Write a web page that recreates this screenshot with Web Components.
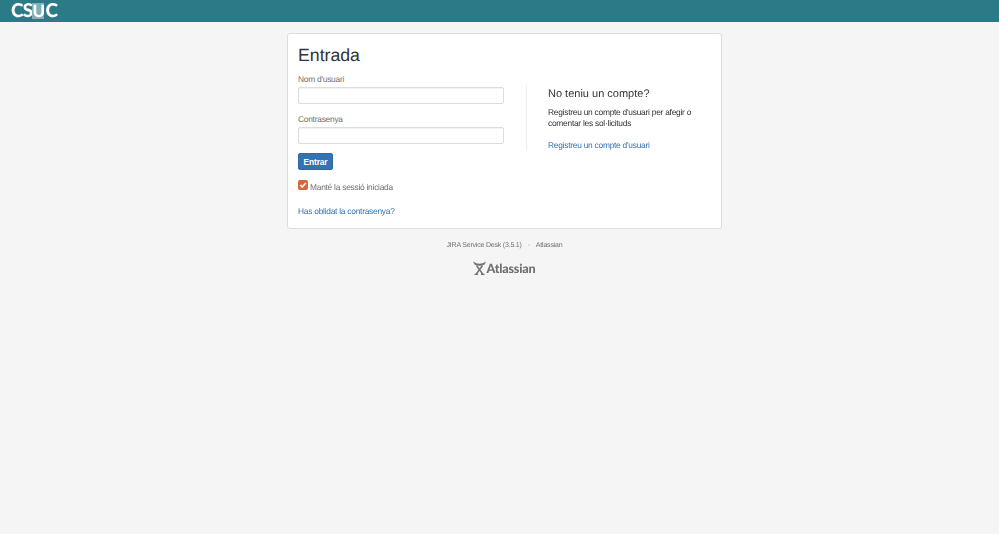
<!DOCTYPE html>
<html>
<head>
<meta charset="utf-8">
<title>Entrada</title>
<style>
    html, body { margin: 0; height: 100%; }
    body {
        background-color: #f5f5f5;
        color: #333;
        font-family: "Liberation Sans", Arial, sans-serif;
        font-size: 8.4px;
        letter-spacing: -0.25px;
        text-rendering: geometricPrecision;
    }
    /* the reference is a downscaled capture, everything in it is a bit soft */
    main, csuc-header { filter: blur(0.3px); }
    main { display: flex; flex-direction: column; align-items: center; padding: 11px 0 0 10px; }
</style>
</head>
<body>
<csuc-header></csuc-header>
<main>
    <login-card>
        <login-form></login-form>
        <signup-panel slot="side"></signup-panel>
    </login-card>
    <page-footer></page-footer>
</main>
<script>
class CsucHeader extends HTMLElement {
    constructor() {
        super();
        this.attachShadow({ mode: "open" }).innerHTML = `
            <style>
                :host { display: flex; align-items: center; height: 22px; background-color: #2a7a88; padding-left: 11px; }
                .logo { display: flex; align-items: center; color: #fff; font: 900 19px/20px Lato, "Liberation Sans", sans-serif; letter-spacing: -0.8px; }
                .u { display: inline-block; width: 12px; height: 16px; margin: 0 1px 0 0; line-height: 16px; text-align: center; background-color: #7fb1ba; color: #fff; font-size: 17px; letter-spacing: 0; }
            </style>
            <div class="logo">CS<span class="u">U</span>C</div>
        `;
    }
}

class LoginCard extends HTMLElement {
    constructor() {
        super();
        this.attachShadow({ mode: "open" }).innerHTML = `
            <style>
                :host { display: flex; box-sizing: border-box; width: 435px; height: 196px; padding: 10px; background-color: #fff; border: 1px solid #ddd; border-radius: 3px; }
                .main { width: 228px; box-sizing: border-box; padding-right: 22px; }
                .side { margin-top: 41px; height: 66px; padding-left: 21px; border-left: 1px solid #eee; flex: 1; }
            </style>
            <div class="main"><slot></slot></div>
            <div class="side"><slot name="side"></slot></div>
        `;
    }
}

class LoginForm extends HTMLElement {
    constructor() {
        super();
        this.attachShadow({ mode: "open" }).innerHTML = `
            <style>
                :host { display: block; color: #707070; }
                h1 { margin: 0 0 7px; height: 23px; font: 500 17.7px/23px "Liberation Sans", sans-serif; letter-spacing: 0; color: #333; }
                label { display: block; line-height: 10px; margin-bottom: 3px; }
                input[type=text], input[type=password] { display: block; box-sizing: border-box; width: 206px; height: 17px; padding: 0 5px; margin: 0 0 10px; border: 1px solid #ddd; border-radius: 2px; background: #fff; box-shadow: inset 0 1px 1px rgba(0,0,0,.05); outline: none; }
                button { display: block; margin: -1px 0 9px; width: 35px; height: 17px; padding: 0; color: #fff; background-color: #3572b0; border: 1px solid #2e6aa6; border-radius: 2px; font: bold 8.4px "Liberation Sans", sans-serif; letter-spacing: -0.1px; }
                .keep { display: flex; align-items: flex-end; height: 13px; margin-bottom: 14px; }
                .keep svg { display: block; width: 10px; height: 10px; margin: 0 2px 2px 0; }
                .keep span { line-height: 11px; position: relative; top: 1px; }
                a { display: block; color: #3572b0; text-decoration: none; line-height: 10px; }
            </style>
            <h1>Entrada</h1>
            <label>Nom d'usuari</label>
            <input type="text">
            <label>Contrasenya</label>
            <input type="password">
            <button>Entrar</button>
            <div class="keep">
                <svg viewBox="0 0 10 10"><rect width="10" height="10" rx="2" fill="#d9663a"/><path d="M2.3 5 L4.2 7 L7.8 3" fill="none" stroke="#fff" stroke-width="1.6"/></svg>
                <span>Manté la sessió iniciada</span>
            </div>
            <a href="#">Has oblidat la contrasenya?</a>
        `;
    }
}

class SignupPanel extends HTMLElement {
    constructor() {
        super();
        this.attachShadow({ mode: "open" }).innerHTML = `
            <style>
                :host { display: block; }
                h2 { margin: 1px 0 4px; font: 500 11px/17px "Liberation Sans", sans-serif; letter-spacing: 0; color: #333; }
                p { margin: 0 0 11px; line-height: 11px; color: #333; }
                a { color: #3572b0; text-decoration: none; line-height: 11px; display: block; }
            </style>
            <h2>No teniu un compte?</h2>
            <p>Registreu un compte d'usuari per afegir o<br>comentar les sol·licituds</p>
            <a href="#">Registreu un compte d'usuari</a>
        `;
    }
}

class PageFooter extends HTMLElement {
    constructor() {
        super();
        this.attachShadow({ mode: "open" }).innerHTML = `
            <style>
                :host { display: flex; flex-direction: column; align-items: center; margin-top: 12px; font-size: 7px; letter-spacing: -0.2px; color: #707070; }
                .links { display: flex; gap: 6px; line-height: 10px; }
                .brand { display: flex; align-items: flex-end; margin-top: 10px; font: 900 12.6px/16px Lato, "Liberation Sans", sans-serif; color: #707070; letter-spacing: -0.2px; }
                svg { width: 13px; height: 14px; display: block; margin-bottom: 2px; }
            </style>
            <div class="links"><span>JIRA Service Desk (3.5.1)</span><span>·</span><span>Atlassian</span></div>
            <div class="brand">
                <svg viewBox="0 0 13 14"><path d="M0 0.5 Q6.5 5 13 0.5 L11.5 3.5 Q6.5 6 1.5 3.5 Z" fill="#707070"/><path d="M3 13.5 L9.5 4.5 M10 13.5 L3.5 4.5 M1.5 13.5 H5 M8 13.5 H11.5" fill="none" stroke="#707070" stroke-width="1.4"/></svg>
                <span>Atlassian</span>
            </div>
        `;
    }
}

customElements.define("csuc-header", CsucHeader);
customElements.define("login-card", LoginCard);
customElements.define("login-form", LoginForm);
customElements.define("signup-panel", SignupPanel);
customElements.define("page-footer", PageFooter);
</script>
</body>
</html>
